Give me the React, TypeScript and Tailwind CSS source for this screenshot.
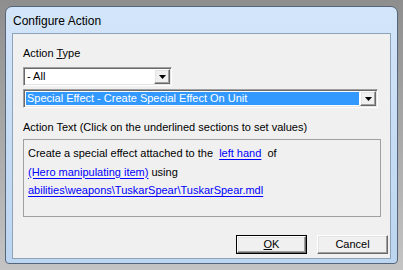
import { ReactNode } from "react";

const font = "font-['Liberation_Sans',Arial,sans-serif]";

function Arrow() {
  return (
    <svg width="7" height="4" viewBox="0 0 7 4" className="block">
      <path d="M0 0h7L3.5 4z" fill="#000" />
    </svg>
  );
}

function DropButton() {
  return (
    <div className="flex h-full w-[16px] items-center justify-center border border-t-white border-l-white border-b-[#696969] border-r-[#696969] bg-[#f0f0f0] shadow-[inset_-1px_-1px_0_#a0a0a0,inset_1px_1px_0_#e3e3e3]">
      <Arrow />
    </div>
  );
}

function Combo({ width, children, selected }: { width: string; children: ReactNode; selected?: boolean }) {
  return (
    <div className={`${width} flex h-[19px] border border-t-[#a0a0a0] border-l-[#a0a0a0] border-b-white border-r-white bg-white p-[1px] shadow-[inset_1px_1px_0_#696969,inset_-1px_-1px_0_#e3e3e3]`}>
      <div className="flex flex-1 p-[1px]">
        <div className={`flex flex-1 items-center pl-[1px] text-[11px] leading-none ${selected ? "bg-[#3399ff] text-white" : "text-black"}`}>
          {children}
        </div>
      </div>
      <DropButton />
    </div>
  );
}

function Link({ children }: { children: ReactNode }) {
  return <span className="text-[#0000ff] underline underline-offset-[2px]">{children}</span>;
}

function Button({ children, isDefault }: { children: ReactNode; isDefault?: boolean }) {
  return (
    <div className={`h-[19px] w-[71px] ${isDefault ? "border border-[#000]" : ""}`}>
      <div className="flex h-full w-full items-center justify-center border border-t-white border-l-white border-b-[#696969] border-r-[#696969] bg-[#f0f0f0] text-[11px] leading-none text-black shadow-[inset_-1px_-1px_0_#a0a0a0,inset_1px_1px_0_#e3e3e3]">
        {children}
      </div>
    </div>
  );
}

export default function App() {
  return (
    <div className={`${font} h-[270px] w-[403px] bg-gradient-to-b from-[#8e8e8e] to-[#c4c4c4] pl-[5px] pt-[6px]`}>
      <div className="flex h-[258px] w-[393px] flex-col rounded-t-[7px] rounded-b-[4px] border border-[#56667a] bg-gradient-to-b from-[#d3e5f9] to-[#bcd5f0] px-[6px] pb-[4px]">
        <div className="flex h-[26px] items-center pl-[1px] pt-[1px] text-[12px] text-black">Configure Action</div>

        <div className="flex flex-1 flex-col border border-[#8ea2ba] bg-[#f0f0f0] pl-[10px]">
          <div className="mt-[12px] text-[11px] leading-[14px] text-black">
            Action <span className="underline">T</span>ype
          </div>
          <div className="mt-[7px]">
            <Combo width="w-[149px]">- All</Combo>
          </div>
          <div className="mt-[3px]">
            <Combo width="w-[355px]" selected>
              Special Effect - Create Special Effect On Unit
            </Combo>
          </div>
          <div className="mt-[12px] text-[11px] leading-[14px] text-black">
            Action Text (Click on the underlined sections to set values)
          </div>
          <div className="mt-[5px] h-[78px] w-[358px] border border-[#a0a0a0] px-[4px] pt-[4px] text-[11px] leading-[18.5px] text-black">
            <div>
              Create a special effect attached to the <span className="mx-[3px]"><Link>left hand</Link></span> of
            </div>
            <div>
              <Link>(Hero manipulating item)</Link> using
            </div>
            <div>
              <Link>abilities\weapons\TuskarSpear\TuskarSpear.mdl</Link>
            </div>
          </div>
          <div className="mt-[18px] flex justify-end gap-[10px] pr-[2px]">
            <Button isDefault>
              <span className="underline">O</span>K
            </Button>
            <Button>Cancel</Button>
          </div>
        </div>
      </div>
    </div>
  );
}
